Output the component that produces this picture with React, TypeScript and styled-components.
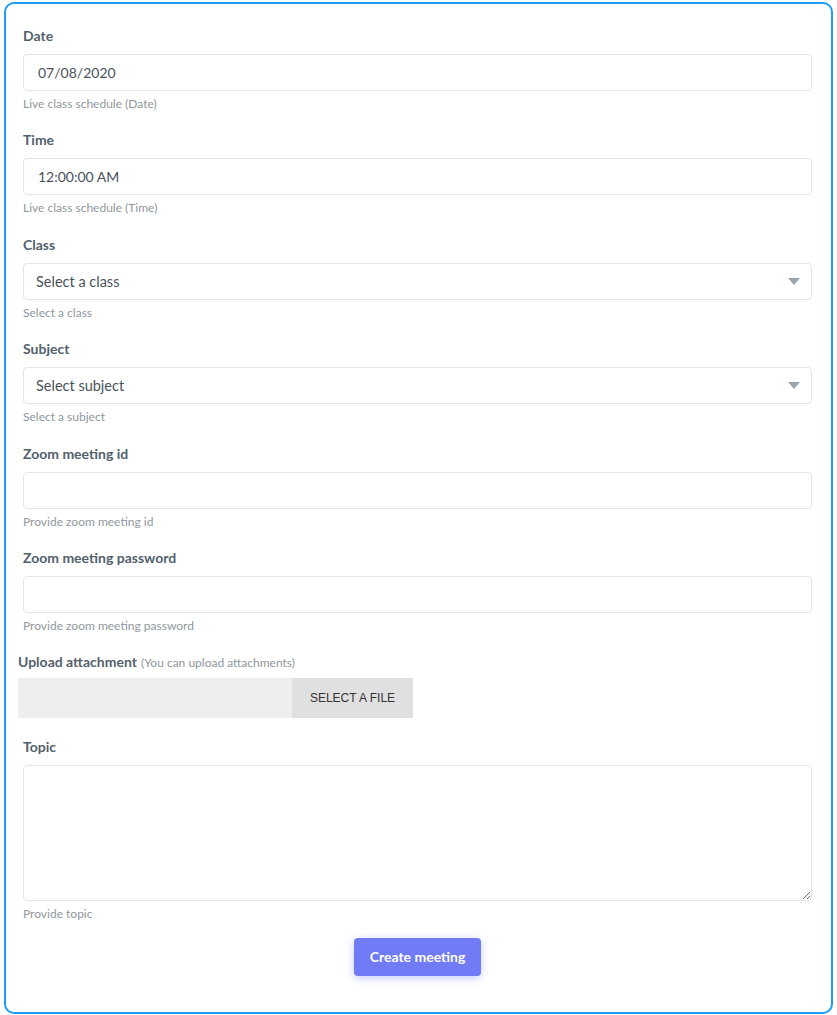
import React from "react";
import styled, { createGlobalStyle } from "styled-components";

const GlobalStyle = createGlobalStyle`
  html, body {
    margin: 0;
    padding: 0;
    background: #ffffff;
  }
  body {
    font-family: Lato, "Open Sans", "Liberation Sans", sans-serif;
    -webkit-font-smoothing: antialiased;
  }
  * { box-sizing: border-box; }
`;

const Card = styled.form`
  margin: 2px 4px 2px 4px;
  border: 2px solid #1b9cf8;
  border-radius: 10px;
  padding: 22px 19px 36px 17px;
  display: flex;
  flex-direction: column;
`;

const Field = styled.div<{ $shift?: number; $last?: boolean }>`
  display: flex;
  flex-direction: column;
  margin-bottom: ${(p) => (p.$last ? "0" : "18.4px")};
  margin-left: ${(p) => (p.$shift ? `${p.$shift}px` : "0")};
`;

const Label = styled.label<{ $tight?: boolean }>`
  font-size: 14px;
  line-height: 20px;
  font-weight: 700;
  color: #535f6b;
  margin-bottom: ${(p) => (p.$tight ? "5px" : "8px")};
`;

const LabelNote = styled.span`
  font-size: 12px;
  font-weight: 400;
  color: #8f979e;
  margin-left: 4px;
`;

const TextInput = styled.input`
  height: 37px;
  width: 100%;
  border: 1px solid #e3e5e7;
  border-radius: 4px;
  padding: 0 14px;
  font-family: inherit;
  font-size: 14px;
  color: #49525b;
  background: #fff;
  outline: none;
`;

const SelectWrap = styled.div`
  position: relative;
`;

const Select = styled.select`
  appearance: none;
  -webkit-appearance: none;
  height: 37px;
  width: 100%;
  border: 1px solid #e3e5e7;
  border-radius: 4px;
  padding: 0 12px;
  font-family: inherit;
  font-size: 14.5px;
  color: #49525b;
  background: #fff;
  outline: none;
`;

const Caret = styled.svg`
  position: absolute;
  right: 12px;
  top: 15px;
  pointer-events: none;
`;

const Help = styled.small`
  font-size: 12px;
  line-height: 16px;
  color: #8f979e;
  margin-top: 5px;
`;

const Upload = styled.div`
  display: flex;
  width: 395px;
  height: 40px;
  background: #eeeeee;
`;

const UploadName = styled.div`
  flex: 1;
`;

const UploadButton = styled.button`
  width: 121px;
  border: none;
  background: #e0e0e0;
  font-family: "Liberation Sans", Arial, sans-serif;
  font-size: 12px;
  color: #333;
  text-transform: uppercase;
  cursor: pointer;
`;

const TextArea = styled.textarea`
  height: 136px;
  width: 100%;
  border: 1px solid #e3e5e7;
  border-radius: 4px;
  padding: 10px 15px;
  font-family: inherit;
  font-size: 14.5px;
  color: #49525b;
  resize: vertical;
  outline: none;
`;

const Actions = styled.div`
  display: flex;
  justify-content: center;
  margin-top: 16px;
`;

const Submit = styled.button`
  height: 38px;
  padding: 0 16px;
  border: none;
  border-radius: 4px;
  background: #717bf5;
  color: #fff;
  font-family: inherit;
  font-size: 14px;
  font-weight: 700;
  box-shadow: 0 2px 8px rgba(113, 123, 245, 0.4);
  cursor: pointer;
`;

const Arrow = () => (
  <Caret width="12" height="7" viewBox="0 0 12 7">
    <path d="M0 0 H12 L6 7 Z" fill="#9aa5ae" />
  </Caret>
);

export default function App() {
  return (
    <>
      <GlobalStyle />
      <Card onSubmit={(e) => e.preventDefault()}>
        <Field>
          <Label>Date</Label>
          <TextInput defaultValue="07/08/2020" />
          <Help>Live class schedule (Date)</Help>
        </Field>
        <Field>
          <Label>Time</Label>
          <TextInput defaultValue="12:00:00 AM" />
          <Help>Live class schedule (Time)</Help>
        </Field>
        <Field>
          <Label>Class</Label>
          <SelectWrap>
            <Select defaultValue="">
              <option value="">Select a class</option>
            </Select>
            <Arrow />
          </SelectWrap>
          <Help>Select a class</Help>
        </Field>
        <Field>
          <Label>Subject</Label>
          <SelectWrap>
            <Select defaultValue="">
              <option value="">Select subject</option>
            </Select>
            <Arrow />
          </SelectWrap>
          <Help>Select a subject</Help>
        </Field>
        <Field>
          <Label>Zoom meeting id</Label>
          <TextInput />
          <Help>Provide zoom meeting id</Help>
        </Field>
        <Field>
          <Label>Zoom meeting password</Label>
          <TextInput />
          <Help>Provide zoom meeting password</Help>
        </Field>
        <Field $shift={-5}>
          <Label $tight>
            Upload attachment<LabelNote>(You can upload attachments)</LabelNote>
          </Label>
          <Upload>
            <UploadName />
            <UploadButton type="button">Select a file</UploadButton>
          </Upload>
        </Field>
        <Field $last>
          <Label>Topic</Label>
          <TextArea />
          <Help>Provide topic</Help>
        </Field>
        <Actions>
          <Submit type="submit">Create meeting</Submit>
        </Actions>
      </Card>
    </>
  );
}
